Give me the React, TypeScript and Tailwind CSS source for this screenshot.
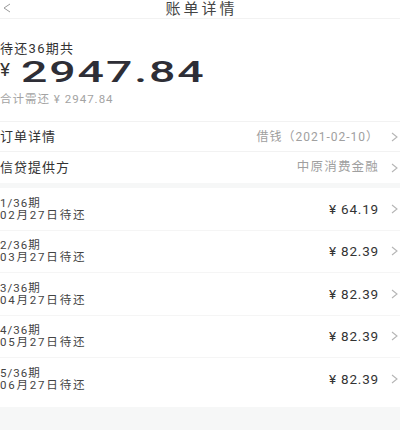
import React from "react";

const FONT = { fontFamily: "Roboto, 'Noto Sans CJK SC', sans-serif" };

function Chevron() {
  return (
    <svg width="7" height="10" viewBox="0 0 7 10" className="shrink-0">
      <polyline points="1,1 6,5 1,9" fill="none" stroke="#b5b5b5" strokeWidth="1.1" />
    </svg>
  );
}

const items = [
  { p: "1/36期", d: "02月27日待还", a: "64.19" },
  { p: "2/36期", d: "03月27日待还", a: "82.39" },
  { p: "3/36期", d: "04月27日待还", a: "82.39" },
  { p: "4/36期", d: "05月27日待还", a: "82.39" },
  { p: "5/36期", d: "06月27日待还", a: "82.39" },
];

export default function App() {
  return (
    <div className="w-[400px] h-[438px] bg-white overflow-hidden text-[#333]" style={FONT}>
      {/* header */}
      <div className="relative h-[19px] flex items-center justify-center border-b border-[#f2f2f2]">
        <svg width="8" height="10" viewBox="0 0 8 10" className="absolute left-[3px] top-[3px]">
          <polyline points="7,1 1,5 7,9" fill="none" stroke="#9a9a9a" strokeWidth="1" />
        </svg>
        <span className="text-[15px] leading-none tracking-[3px] text-[#444] pl-[3px]">账单详情</span>
      </div>

      {/* summary */}
      <div className="h-[103px] pt-[23px] border-b border-[#f2f2f2]">
        <div className="text-[13px] leading-[14px] tracking-[1.3px] text-[#333]">待还36期共</div>
        <div className="flex items-start h-[30px] mt-[1px]">
          <span className="text-[19px] leading-none mt-[3px] w-[21px] text-[#333]">¥</span>
          <span className="inline-block origin-left scale-x-[1.6] text-[29px] leading-[30px] font-medium tracking-[1.2px] text-[#2e2e36]">
            2947.84
          </span>
        </div>
        <div className="text-[11.5px] leading-[14px] tracking-[1px] text-[#a3a3a3] mt-[5px]">合计需还 ¥ 2947.84</div>
      </div>

      {/* rows */}
      <div className="h-[30px] flex items-center justify-between border-b border-[#f2f2f2] pr-[2px]">
        <span className="text-[13px] tracking-[1px] text-[#333]">订单详情</span>
        <div className="flex items-center gap-[12px]">
          <span className="text-[12px] tracking-[1px] text-[#a0a0a0]">借钱（2021-02-10）</span>
          <Chevron />
        </div>
      </div>
      <div className="h-[31px] flex items-center justify-between pr-[2px]">
        <span className="text-[13px] tracking-[1px] text-[#333]">信贷提供方</span>
        <div className="flex items-center gap-[12px]">
          <span className="text-[12.5px] tracking-[1.2px] text-[#a0a0a0]">中原消费金融</span>
          <Chevron />
        </div>
      </div>
      <div className="h-[5px] bg-[#f6f7f7]" />

      {/* installments */}
      <div>
        {items.map((it, i) => (
          <div
            key={i}
            className={
              "h-[42.5px] flex items-center justify-between pr-[2px] " +
              (i < items.length - 1 ? "border-b border-[#f5f5f5]" : "")
            }
          >
            <div className="flex flex-col">
              <span className="text-[11.5px] leading-[12px] tracking-[1px] text-[#444]">{it.p}</span>
              <span className="text-[11.5px] leading-[12px] tracking-[1.8px] text-[#444]">{it.d}</span>
            </div>
            <div className="flex items-center gap-[12px]">
              <span className="text-[13.5px] tracking-[0.8px] text-[#333]">¥ {it.a}</span>
              <Chevron />
            </div>
          </div>
        ))}
      </div>
      <div className="h-[6px]" />
      <div className="h-[23px] bg-[#f6f7f7]" />
    </div>
  );
}
